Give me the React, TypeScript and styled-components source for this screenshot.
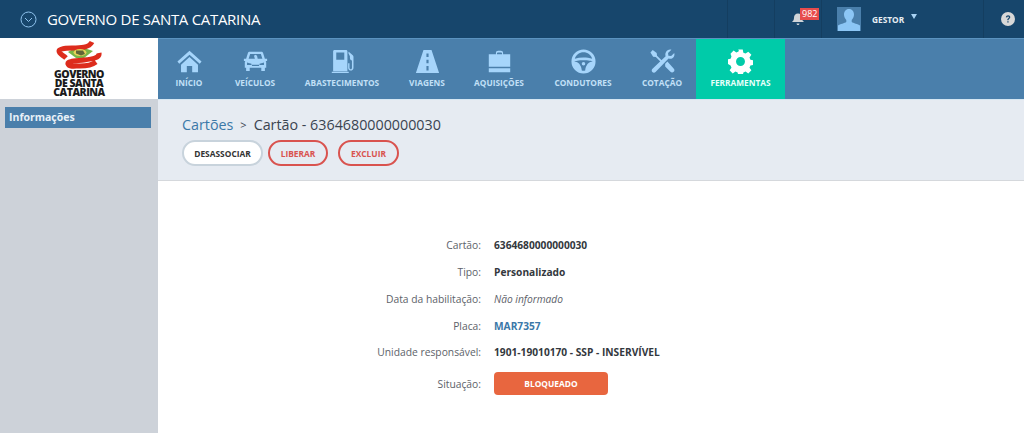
import React from "react";
import styled, { createGlobalStyle } from "styled-components";

const GlobalStyle = createGlobalStyle`
  html, body {
    margin: 0;
    padding: 0;
    background: #fff;
    font-family: "Open Sans", "Liberation Sans", sans-serif;
  }
`;

const Page = styled.div`
  width: 1024px;
  height: 433px;
  overflow: hidden;
  display: flex;
  flex-direction: column;
`;

const TopBar = styled.header`
  height: 38px;
  background: #17466c;
  display: flex;
  align-items: center;
  color: #fff;
`;

const Brand = styled.div`
  display: flex;
  align-items: center;
  gap: 10px;
  padding-left: 20px;
  font-size: 15px;
  letter-spacing: -0.3px;
  flex: 1;
`;

const TopCell = styled.div<{ $width: number; $start?: boolean; $padLeft?: number }>`
  width: ${(p) => p.$width}px;
  height: 38px;
  box-sizing: border-box;
  border-left: 1px solid #143e60;
  padding-left: ${(p) => p.$padLeft ?? 0}px;
  display: flex;
  align-items: center;
  justify-content: ${(p) => (p.$start ? "flex-start" : "center")};
  position: relative;
`;

const Badge = styled.span`
  position: absolute;
  left: 25px;
  top: 8px;
  background: #e74c4c;
  color: #fff;
  font-size: 9px;
  line-height: 12px;
  padding: 0 2px;
`;

const UserName = styled.span`
  font-size: 8.3px;
  font-weight: 700;
  margin-left: 11px;
  color: #e8eef3;
`;

const Caret = styled.span`
  width: 0;
  height: 0;
  border-left: 3.5px solid transparent;
  border-right: 3.5px solid transparent;
  border-top: 5px solid #a9d2f3;
  margin-left: 7px;
  margin-top: -5px;
`;

const Body = styled.div`
  flex: 1;
  display: grid;
  grid-template-columns: 158px 1fr;
  grid-template-rows: 61px 1fr;
  min-height: 0;
`;

const LogoBox = styled.div`
  background: #fff;
  display: flex;
  flex-direction: column;
  align-items: center;
  padding-top: 2px;
`;

const LogoText = styled.div`
  font-size: 10.5px;
  line-height: 9.2px;
  font-weight: 800;
  letter-spacing: -0.5px;
  color: #1b1b1b;
  text-align: center;
  margin-top: 1px;
`;

const Nav = styled.nav`
  background: #4a7fab;
  display: flex;
  border-top: 1px solid #5b93c0;
  box-sizing: border-box;
`;

const NavItem = styled.div<{ $active?: boolean; $width: number }>`
  width: ${(p) => p.$width}px;
  background: ${(p) => (p.$active ? "#00cba9" : "transparent")};
  color: ${(p) => (p.$active ? "#fff" : "#a6d5fb")};
  display: flex;
  flex-direction: column;
  align-items: center;
  padding-top: 10px;
  box-sizing: border-box;
`;

const NavIcon = styled.svg`
  width: 25px;
  height: 25px;
  fill: currentColor;
  display: block;
`;

const NavLabel = styled.span<{ $active?: boolean }>`
  font-size: 8.3px;
  font-weight: 700;
  margin-top: 3px;
  white-space: nowrap;
  color: ${(p) => (p.$active ? "#e6fff9" : "#c2e0f7")};
`;

const Sidebar = styled.aside`
  background: #cdd2d9;
  padding: 8px 7px 0 5px;
`;

const SideItem = styled.div`
  background: #4a7fab;
  color: #e8f1f8;
  font-size: 10.5px;
  font-weight: 700;
  height: 21px;
  line-height: 20px;
  padding-left: 4px;
`;

const Content = styled.main`
  display: flex;
  flex-direction: column;
  min-width: 0;
`;

const PageHead = styled.div`
  height: 82px;
  box-sizing: border-box;
  background: #e6ebf2;
  border-top: 1px solid #d4e6f2;
  border-bottom: 1px solid #d5d8dc;
  padding: 14px 0 0 24px;
`;

const Crumbs = styled.div`
  display: flex;
  align-items: center;
  font-size: 14.3px;
  line-height: 21px;
  color: #3a4450;
`;

const CrumbLink = styled.span`
  color: #3b78a8;
`;

const CrumbSep = styled.span`
  font-size: 11px;
  margin: 0 7px;
`;

const Buttons = styled.div`
  display: flex;
  gap: 5px;
  margin-top: 5px;
`;

const Button = styled.button<{ $danger?: boolean; $width: number; $gap?: number }>`
  width: ${(p) => p.$width}px;
  height: 26px;
  margin-left: ${(p) => p.$gap ?? 0}px;
  border-radius: 13px;
  border: 2px solid ${(p) => (p.$danger ? "#d9534f" : "#c8d3dc")};
  background: ${(p) => (p.$danger ? "transparent" : "#fff")};
  color: ${(p) => (p.$danger ? "#d9534f" : "#333")};
  font-family: inherit;
  font-size: 8.4px;
  font-weight: 700;
  padding: 0;
`;

const Details = styled.dl`
  margin: 51px 0 0;
  display: grid;
  grid-template-columns: 323px 1fr;
  column-gap: 13px;
  grid-template-rows: repeat(5, 26.75px) 36px;
  align-items: center;
  font-size: 10.3px;
`;

const Label = styled.dt`
  text-align: right;
  color: #5d6269;
`;

const Value = styled.dd<{ $italic?: boolean; $link?: boolean }>`
  margin: 0;
  font-size: 10.2px;
  font-weight: ${(p) => (p.$italic ? 400 : 700)};
  font-style: ${(p) => (p.$italic ? "italic" : "normal")};
  color: ${(p) => (p.$link ? "#3b78a8" : p.$italic ? "#5d6269" : "#33383d")};
`;

const Status = styled.span`
  display: flex;
  align-items: center;
  justify-content: center;
  width: 114px;
  height: 23px;
  border-radius: 4px;
  background: #e8663f;
  color: #fff;
  font-size: 8.4px;
  font-weight: 700;
`;

const icons: Record<string, React.ReactNode> = {
  home: <path d="M14 2 0.500 14l2 2.500L14 6.500 25.500 16.500l2-2.500L14 2ZM4.500 17.500 14 9l9.500 8.500V26H17v-7h-6v7H4.500v-8.500Z" />,
  car: (
    <path
      fillRule="evenodd"
      d="M7.500 3h13c1 0 1.700.6 2 1.500L24.500 11H27v2.500h-1.600c.4.600.6 1.200.6 2V21h-1.500v3.500h-4V21H7.500v3.500h-4V21H2v-5.500c0-.8.2-1.400.6-2H1V11h2.500l2-6.500C5.800 3.600 6.500 3 7.500 3ZM8 5.500 6.300 11h7l-1-3.500L14 6.300l1.700 1.200.8 3.500h5.200L20 5.500H8ZM4.500 15v3h5v-1.500L4.500 15Zm19 0-5 1.500V18h5v-3ZM10 17.500V19h8v-1.500h-8Z"
    />
  ),
  fuel: (
    <path
      fillRule="evenodd"
      d="M5 1h13c.8 0 1.500.7 1.500 1.500V25h-16V2.500C3.500 1.700 4.200 1 5 1Zm2 3v8h9V4H7ZM21 3l4.500 4c.5.500.8 1.100.8 1.800V21c0 1.900-1.300 3.200-3 3.200s-3-1.300-3-3.200v-5h1.500v5c0 1 .6 1.700 1.500 1.700s1.300-.7 1.300-1.700v-8c-1.300-.3-2.300-1.400-2.300-3V8l-1.800-3.600L21 3ZM2 25.500h19V27H2v-1.500Z"
    />
  ),
  road: (
    <path
      fillRule="evenodd"
      d="M9.500 1h9L27 27H1L9.500 1Zm3.300 4v4h2.400V5h-2.400Zm0 7v4h2.400v-4h-2.400Zm0 7v5h2.400v-5h-2.400Z"
    />
  ),
  bag: (
    <path
      fillRule="evenodd"
      d="M10 6V4.500C10 3 11 2 12.500 2h3C17 2 18 3 18 4.500V6h8v14H2V6h8Zm1.200 0h5.600V4.800c0-.6-.4-1-1-1h-3.600c-.6 0-1 .4-1 1V6ZM2 21.500h24V26H2v-4.500Z"
    />
  ),
  wheel: (
    <path
      fillRule="evenodd"
      d="M14 .5a13.500 13.500 0 1 1 0 27 13.500 13.500 0 0 1 0-27Zm0 3.200c-4.500 0-8.400 3-9.700 7.100 3-.9 6.200-1.400 9.700-1.400s6.700.5 9.700 1.400C22.400 6.700 18.500 3.700 14 3.700ZM3.800 14c4.600.4 7.700 4.100 8.300 10 .6.200 1.300.3 1.900.3s1.300-.1 1.900-.3c.6-5.900 3.700-9.600 8.300-10-.6-.7-5-1.500-10.200-1.500S4.400 13.300 3.800 14Zm10.200.5a2 2 0 1 1 0 4 2 2 0 0 1 0-4Z"
    />
  ),
  tools: (
    <path d="M3 1 7.500 4.500l.4 3L15 14.500l-1.500 1.500-7-7-3-.4L0.500 4 3 1ZM24 .8l-3.800 3.600.4 3.100 3.100.4 3.500-3.400c.6 2.400-.1 4.700-2.100 5.800-1.500.8-3 .7-4.300.2L6.500 25.500c-1.100 1.200-2.800 1.300-3.900.3-1-1-.9-2.600.2-3.700L17.500 8c-.5-1.400-.5-3 .3-4.400C19 1.300 21.500 0 24 .8ZM17 16.500l2.500-2.500 7.200 8c1 1.200.8 2.700-.2 3.600-1 1-2.500 1-3.600 0L17 19.500v-3Z" />
  ),
  gear: (
    <path
      fillRule="evenodd"
      d="M11.500 .5h5l.7 3.600 2.500 1 3-2.100 3.500 3.500-2.100 3 1 2.500 3.600.7v5l-3.600.7-1 2.500 2.100 3-3.500 3.500-3-2.100-2.500 1-.7 3.600h-5l-.7-3.600-2.500-1-3 2.100-3.500-3.500 2.100-3-1-2.500L-.7 16.500v-5l3.600-.7 1-2.500L2.800 5.300l3.500-3.500 3 2.100 2.500-1 .7-3.600ZM14 9a5 5 0 1 0 0 10 5 5 0 0 0 0-10Z"
    />
  ),
};

const navItems = [
  { label: "INÍCIO", icon: "home", width: 62 },
  { label: "VEÍCULOS", icon: "car", width: 70 },
  { label: "ABASTECIMENTOS", icon: "fuel", width: 104 },
  { label: "VIAGENS", icon: "road", width: 66 },
  { label: "AQUISIÇÕES", icon: "bag", width: 78 },
  { label: "CONDUTORES", icon: "wheel", width: 90 },
  { label: "COTAÇÃO", icon: "tools", width: 68 },
  { label: "FERRAMENTAS", icon: "gear", width: 89, active: true },
];

const details = [
  { label: "Cartão:", value: "6364680000000030" },
  { label: "Tipo:", value: "Personalizado" },
  { label: "Data da habilitação:", value: "Não informado", italic: true },
  { label: "Placa:", value: "MAR7357", link: true },
  { label: "Unidade responsável:", value: "1901-19010170 - SSP - INSERVÍVEL" },
];

const Logo = () => (
  <svg width="46" height="29" viewBox="0 0 46 29" fill="none">
    <path d="M12 12 22 6l15 5-9 7-8 0-8-6Z" fill="#79b548" />
    <path d="M36 2C33 8 24 8 16 8 8 8 3 9 3 11c0 3 4 4 7 7" stroke="#dd2c1c" strokeWidth="5" />
    <path d="M43 13c1 5-7 6-15 7-8 1-17 1-16 4 1 3 6 2 12 2s12-1 16-4" stroke="#dd2c1c" strokeWidth="5" />
    <ellipse cx="24" cy="12.500" rx="6.500" ry="3.500" fill="#e3d25a" />
    <path d="M20 10.500h7l2 3.500-4 1.500-5-2v-3Z" fill="#33402c" opacity="0.75" />
  </svg>
);

const App = () => (
  <Page>
    <GlobalStyle />
    <TopBar>
      <Brand>
        <svg width="17" height="17" viewBox="0 0 17 17" fill="none" stroke="#8fc3ee" strokeWidth="1">
          <circle cx="8.500" cy="8.500" r="7.500" />
          <path d="M5 7l3.500 3.500L12 7" />
        </svg>
        GOVERNO DE SANTA CATARINA
      </Brand>
      <TopCell $width={47} />
      <TopCell $width={47}>
        <svg width="14" height="14" viewBox="0 0 14 14" fill="#d0d5d9">
          <path d="M7 1.500c2.500 0 4 1.800 4 4.200 0 2 .6 3 2 4.300H1c1.400-1.300 2-2.300 2-4.300C3 3.300 4.500 1.500 7 1.500ZM5.500 11.500h3C8.300 12.500 7.700 13 7 13s-1.300-.5-1.500-1.500Z" />
        </svg>
        <Badge>982</Badge>
      </TopCell>
      <TopCell $width={162} $start $padLeft={15}>
        <svg width="24" height="24" viewBox="0 0 24 24">
          <rect width="24" height="24" fill="#4a7fab" />
          <path d="M12 2c3.300 0 5 2.600 5 5.600 0 2.200-.9 4.200-2.300 5.400v2c1.500 1.200 6.300 2 8.300 3.500V24H1v-5.500c2-1.500 6.800-2.300 8.300-3.500v-2C7.900 11.800 7 9.800 7 7.600 7 4.600 8.700 2 12 2Z" fill="#8cc6f5" />
        </svg>
        <UserName>GESTOR</UserName>
        <Caret />
      </TopCell>
      <TopCell $width={41} $padLeft={7}>
        <svg width="14" height="14" viewBox="0 0 14 14">
          <circle cx="7" cy="7" r="7" fill="#d8d8d8" />
          <path d="M4.800 5.300C5 3.900 5.900 3.200 7.100 3.200c1.300 0 2.200.8 2.200 1.900 0 .9-.5 1.300-1.100 1.800-.5.400-.7.700-.7 1.300H6.300c0-1 .3-1.500.9-2 .5-.4.700-.6.700-1 0-.4-.3-.7-.8-.7-.5 0-.8.300-.9.900l-1.400-.1ZM6.300 9.200h1.300v1.400H6.300V9.200Z" fill="#17466c" />
        </svg>
      </TopCell>
    </TopBar>
    <Body>
      <LogoBox>
        <Logo />
        <LogoText>
          GOVERNO
          <br />
          DE SANTA
          <br />
          CATARINA
        </LogoText>
      </LogoBox>
      <Nav>
        {navItems.map((item) => (
          <NavItem key={item.label} $active={item.active} $width={item.width}>
            <NavIcon viewBox="0 0 28 28">{icons[item.icon]}</NavIcon>
            <NavLabel $active={item.active}>{item.label}</NavLabel>
          </NavItem>
        ))}
      </Nav>
      <Sidebar>
        <SideItem>Informações</SideItem>
      </Sidebar>
      <Content>
        <PageHead>
          <Crumbs>
            <CrumbLink>Cartões</CrumbLink>
            <CrumbSep>&gt;</CrumbSep>
            Cartão - 6364680000000030
          </Crumbs>
          <Buttons>
            <Button $width={81}>DESASSOCIAR</Button>
            <Button $danger $width={60}>LIBERAR</Button>
            <Button $danger $width={61} $gap={5}>EXCLUIR</Button>
          </Buttons>
        </PageHead>
        <Details>
          {details.map((row) => (
            <React.Fragment key={row.label}>
              <Label>{row.label}</Label>
              <Value $italic={row.italic} $link={row.link}>{row.value}</Value>
            </React.Fragment>
          ))}
          <Label>Situação:</Label>
          <Value>
            <Status>BLOQUEADO</Status>
          </Value>
        </Details>
      </Content>
    </Body>
  </Page>
);

export default App;
